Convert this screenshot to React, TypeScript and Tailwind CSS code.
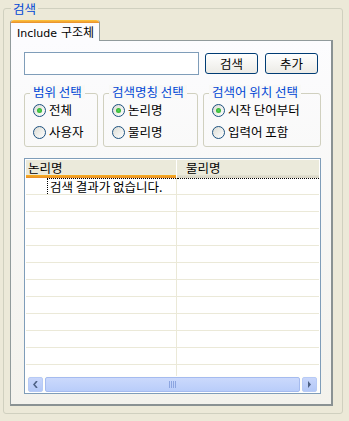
const ko = { fontFamily: '"Noto Sans CJK KR", "DejaVu Sans", sans-serif' };

function Radio({ label, checked }: { label: string; checked?: boolean }) {
  return (
    <div className="flex h-[22px] items-center gap-[3px]">
      <span className="flex h-[13px] w-[13px] shrink-0 items-center justify-center rounded-full border border-[#1c5180] bg-gradient-to-br from-[#dcdcd4] to-white">
        {checked && (
          <span className="h-[5px] w-[5px] rounded-full bg-[radial-gradient(circle,#55d855,#21a121)]" />
        )}
      </span>
      <span className="text-[12.5px] leading-[14px] text-black" style={ko}>
        {label}
      </span>
    </div>
  );
}

function Group({ title, width, children }: { title: string; width: string; children: React.ReactNode }) {
  return (
    <div className={`relative mt-[18px] h-[54px] rounded-[3px] border border-[#d0d0bf] pl-[8px] pt-[5px] ${width}`}>
      <span
        className="absolute -top-[9px] left-[5px] bg-[#f9f9f7] px-[3px] text-[12.5px] leading-[14px] text-[#0046d5]"
        style={ko}
      >
        {title}
      </span>
      {children}
    </div>
  );
}

function XpButton({ label }: { label: string }) {
  return (
    <button
      className="flex h-[21px] w-[53px] items-center justify-center rounded-[3px] border border-[#003c74] bg-gradient-to-b from-white to-[#ecebe6] text-[12.5px] leading-[14px] text-black"
      style={ko}
    >
      {label}
    </button>
  );
}

export default function App() {
  const rows = Array.from({ length: 12 });
  return (
    <div className="h-[421px] w-[349px] overflow-hidden bg-[#ece9d8] pl-[3px] pt-[8px]">
      <div className="relative h-[406px] w-[340px] rounded-[3px] border border-[#d0d0bf] pl-[6px] pt-[11px]">
        <span
          className="absolute -top-[7px] left-[7px] bg-[#ece9d8] px-[2px] text-[12.5px] leading-[14px] text-[#0046d5]"
          style={ko}
        >
          검색
        </span>

        {/* tab header */}
        <div className="relative z-10 flex h-[21px]">
          <div className="flex h-[21px] w-[90px] flex-col rounded-t-[3px] border-x border-[#919b9c] bg-[#fcfcfe]">
            <div className="h-[3px] rounded-t-[3px] bg-gradient-to-b from-[#ffc83c] to-[#e68b2c]" />
            <div
              className="pl-[6px] pt-[2px] text-[12px] leading-[14px] text-black"
              style={{ fontFamily: '"DejaVu Sans", "Noto Sans CJK KR", sans-serif' }}
            >
              <span className="text-[11px]">Include</span> <span style={ko}>구조체</span>
            </div>
          </div>
        </div>

        {/* tab panel */}
        <div className="-mt-[1px] h-[366px] w-[323px] border border-r-[2px] border-b-[2px] border-[#919b9c] border-r-[#8a9293] border-b-[#8a9293] bg-gradient-to-b from-[#fcfcfe] to-[#f3f2ec] pl-[13px] pt-[11px]">
          <div className="flex items-center">
            <div className="h-[23px] w-[175px] border border-[#7f9db9] bg-white" />
            <div className="ml-[6px]">
              <XpButton label="검색" />
            </div>
            <div className="ml-[7px]">
              <XpButton label="추가" />
            </div>
          </div>

          <div className="flex gap-[5px]">
            <Group title="범위 선택" width="w-[74px]">
              <Radio label="전체" checked />
              <Radio label="사용자" />
            </Group>
            <Group title="검색명칭 선택" width="w-[95px]">
              <Radio label="논리명" checked />
              <Radio label="물리명" />
            </Group>
            <Group title="검색어 위치 선택" width="w-[118px]">
              <Radio label="시작 단어부터" checked />
              <Radio label="입력어 포함" />
            </Group>
          </div>

          {/* grid */}
          <div className="mt-[11px] flex h-[236px] w-[297px] flex-col overflow-hidden border border-[#7f9db9] bg-white p-[1px]">
            <div className="flex h-[18px] shrink-0">
              <div className="flex w-[150px] flex-col bg-[#ebeadb]">
                <div className="flex-1 pl-[2px] pt-[1px] text-[12.5px] leading-[14px] text-black" style={ko}>
                  논리명
                </div>
                <div className="h-[3px] bg-gradient-to-b from-[#f9b119] to-[#e68b2c]" />
              </div>
              <div className="flex flex-1 flex-col border-l border-white bg-[#ebeadb]">
                <div className="flex-1 pl-[9px] pt-[1px] text-[12.5px] leading-[14px] text-black" style={ko}>
                  물리명
                </div>
                <div className="h-[3px] bg-gradient-to-b from-[#e2e1d2] to-[#d6d2c2]" />
              </div>
            </div>
            <div className="flex-1 overflow-hidden">
              {rows.map((_, i) => (
                <div key={i} className="flex h-[17px] border-b border-[#ebe9d8]">
                  <div className="w-[151px] border-r border-[#ebe9d8] pl-[21px]">
                    {i === 0 && (
                      <div
                        className="h-[16px] whitespace-nowrap border-l border-t border-dotted border-black pl-[2px] text-[12.5px] leading-[15px] text-black"
                        style={ko}
                      >
                        검색 결과가 없습니다.
                      </div>
                    )}
                  </div>
                  <div className="flex-1">
                    {i === 0 && <div className="h-[16px] border-t border-dotted border-black" />}
                  </div>
                </div>
              ))}
            </div>
            {/* horizontal scrollbar */}
            <div className="flex h-[16px] shrink-0 items-center gap-[2px] bg-[#fefefb] px-[2px]">
              <div className="flex h-[15px] w-[15px] items-center justify-center rounded-[2px] border border-[#b7caf5] bg-gradient-to-b from-[#c8d6fb] to-[#b3c8f7]">
                <svg width="5" height="7" viewBox="0 0 5 7">
                  <path d="M4 0 L1 3.5 L4 7" fill="none" stroke="#4d6185" strokeWidth="1.6" />
                </svg>
              </div>
              <div className="flex h-[15px] flex-1 items-center justify-center rounded-[2px] border border-[#a5bbef] bg-gradient-to-b from-[#cbd9fc] to-[#b9cdfa]">
                <svg width="8" height="7" viewBox="0 0 8 7">
                  <path d="M0.5 0V7M2.5 0V7M4.5 0V7M6.5 0V7" stroke="#8ca5e0" strokeWidth="1" />
                </svg>
              </div>
              <div className="flex h-[15px] w-[15px] items-center justify-center rounded-[2px] border border-[#b7caf5] bg-gradient-to-b from-[#c8d6fb] to-[#b3c8f7]">
                <svg width="5" height="7" viewBox="0 0 5 7">
                  <path d="M1 0 L4 3.5 L1 7 Z" fill="#4d6185" />
                </svg>
              </div>
            </div>
          </div>
        </div>
      </div>
    </div>
  );
}
